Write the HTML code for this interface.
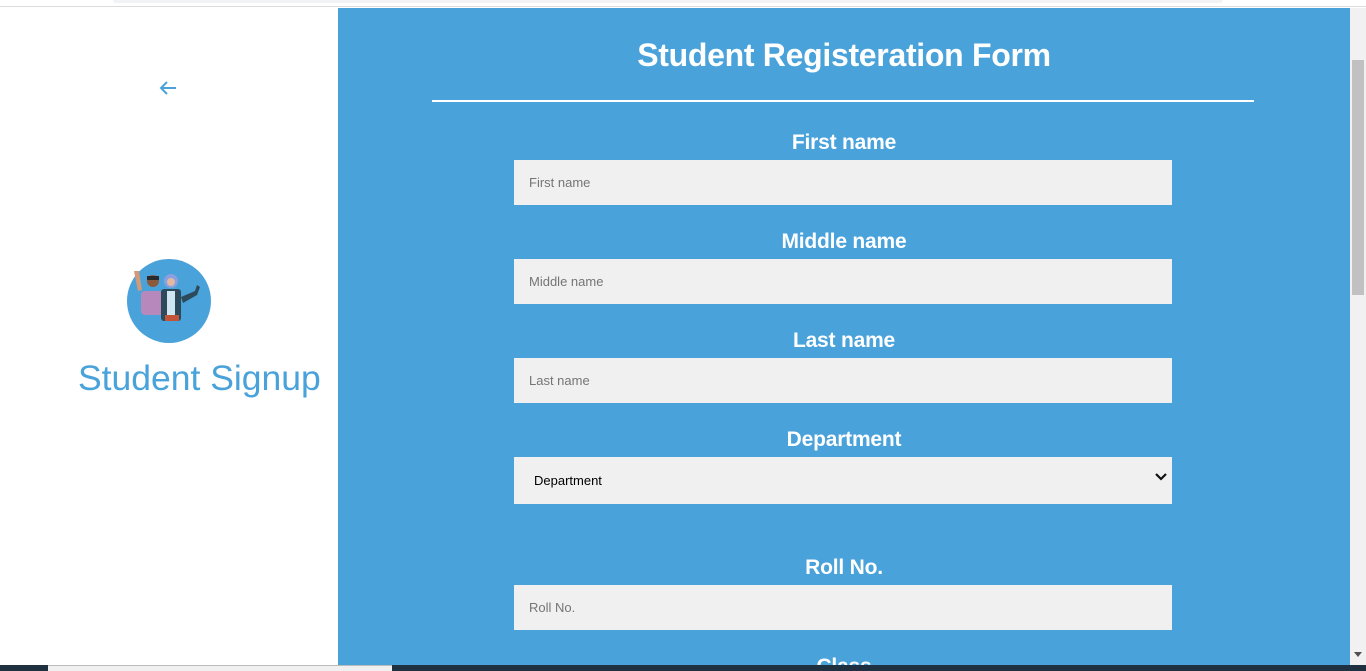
<!DOCTYPE html>
<html><head><style>
*{margin:0;padding:0;box-sizing:border-box}
body{width:1366px;height:671px;overflow:hidden;background:#fff;font-family:"Liberation Sans",sans-serif;position:relative}
.top{position:absolute;left:0;top:0;width:1366px;height:7px;background:#fff;border-bottom:1px solid #dcdcdc}
.top .pill{position:absolute;left:113px;top:0;width:1110px;height:3px;background:#f1f3f4;border-radius:0 0 6px 6px}
.blue{position:absolute;left:338px;top:8px;width:1012px;height:657px;background:#49a2da;overflow:hidden}
.sb{position:absolute;left:1350px;top:8px;width:16px;height:657px;background:#f1f1f1}
.thumb{position:absolute;left:1352px;top:60px;width:12px;height:235px;background:#c1c1c1}
.bot{position:absolute;left:0;top:665px;width:1366px;height:6px;background:#1f3040}
.bot .l{position:absolute;left:48px;top:0;width:344px;height:6px;background:#f0f0f0;border-top:1px solid #bbb}
h1{position:absolute;left:0;width:1012px;top:29px;text-align:center;color:#fff;font-size:32px;font-weight:bold;letter-spacing:-0.3px}
.hr{position:absolute;left:94px;top:92px;width:822px;height:2px;background:#fff}
.lbl{position:absolute;left:0;width:1012px;text-align:center;color:#fff;font-size:21px;font-weight:bold;letter-spacing:-0.2px}
.in{position:absolute;left:176px;width:658px;height:45px;background:#f0f0f0;font-size:13px;color:#757575;padding:15px 0 0 15px}
.sel{color:#000;padding-left:20px;padding-top:16px}
.chev{position:absolute;right:5px;top:15px}
</style></head><body>
<div class="top"><div class="pill"></div></div>
<svg style="position:absolute;left:158px;top:79px" width="20" height="18" viewBox="0 0 20 18"><path d="M18 9H3M9 3L3 9l6 6" stroke="#49a2da" stroke-width="2" fill="none"/></svg>
<svg style="position:absolute;left:127px;top:259px" width="84" height="84" viewBox="0 0 84 84">
<circle cx="42" cy="42" r="42" fill="#49a2da"/>
<rect x="14" y="32" width="22" height="24" rx="4" fill="#b788bb"/>
<circle cx="26" cy="22" r="6" fill="#8b5a3c"/><path d="M20 17h12v4H20z" fill="#2a2a2a"/>
<path d="M7 12l4 20 4-1-3-19z" fill="#d39a7a"/>
<rect x="34" y="30" width="20" height="32" rx="3" fill="#2d4a5a"/>
<rect x="40" y="32" width="8" height="26" fill="#cfe6f0"/>
<rect x="38" y="56" width="14" height="6" fill="#c0553a"/>
<circle cx="44" cy="22" r="7" fill="#8aa0e0"/><circle cx="44" cy="23" r="4" fill="#e3b9a0"/>
<path d="M54 38l14-6 2-6 3 2-3 8-14 8z" fill="#2d4a5a"/>
</svg>
<div style="position:absolute;left:78px;top:358px;font-size:35.5px;color:#49a2da;font-weight:normal;letter-spacing:0">Student Signup</div>
<div class="blue">
<h1>Student Registeration Form</h1>
<div class="hr"></div>
<div class="lbl" style="top:123px">First name</div>
<div class="in" style="top:152px">First name</div>
<div class="lbl" style="top:222px">Middle name</div>
<div class="in" style="top:251px">Middle name</div>
<div class="lbl" style="top:321px">Last name</div>
<div class="in" style="top:350px">Last name</div>
<div class="lbl" style="top:420px">Department</div>
<div class="in sel" style="top:449px;height:47px">Department<svg class="chev" width="12" height="10" viewBox="0 0 12 10"><path d="M1 2l5 5 5-5" stroke="#111" stroke-width="2.2" fill="none"/></svg></div>
<div class="lbl" style="top:548px">Roll No.</div>
<div class="in" style="top:577px">Roll No.</div>
<div class="lbl" style="top:647px">Class</div>
</div>
<div class="sb"></div><div class="thumb"></div>
<svg style="position:absolute;left:1354px;top:652px" width="8" height="6"><path d="M0 0h8L4 5z" fill="#505050"/></svg>
<div class="bot"><div class="l"></div></div>
</body></html>
